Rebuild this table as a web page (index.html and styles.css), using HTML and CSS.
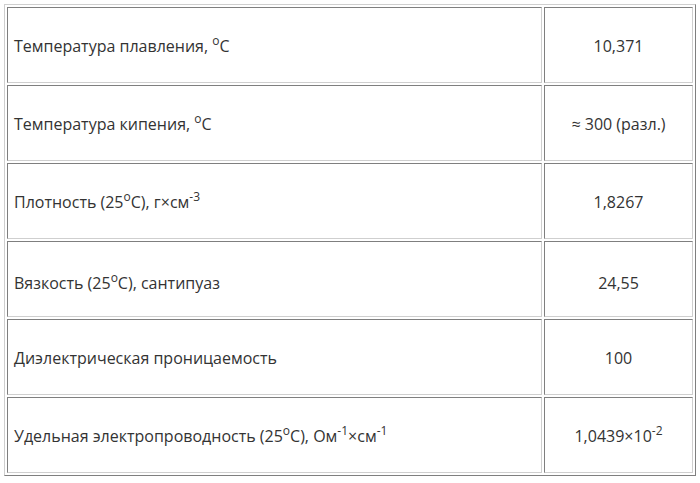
FILE: index.html
```html
<!DOCTYPE html>
<html lang="ru">
<head>
<meta charset="utf-8">
<link rel="stylesheet" href="styles.css">
</head>
<body>
<table class="props">
  <tr><td class="name">Температура плавления, <sup>o</sup>C</td><td class="val">10,371</td></tr>
  <tr><td class="name">Температура кипения, <sup>o</sup>C</td><td class="val">≈ 300 (разл.)</td></tr>
  <tr><td class="name">Плотность (25<sup>o</sup>C), г×см<sup>-3</sup></td><td class="val">1,8267</td></tr>
  <tr><td class="name lower">Вязкость (25<sup>o</sup>C), сантипуаз</td><td class="val lower">24,55</td></tr>
  <tr><td class="name">Диэлектрическая проницаемость</td><td class="val">100</td></tr>
  <tr><td class="name">Удельная электропроводность (25<sup>o</sup>C), Ом<sup>-1</sup>×см<sup>-1</sup></td><td class="val">1,0439×10<sup>-2</sup></td></tr>
</table>
</body>
</html>
```
FILE: styles.css
```css
html, body {
  margin: 0;
  padding: 0;
  background: #ffffff;
}
body {
  padding: 4px;
  font-family: "Open Sans", "Liberation Sans", sans-serif;
  font-size: 16px;
  color: #333333;
}
.props {
  width: 692px;
  border-collapse: separate;
  border-spacing: 2px;
  border: 1px solid;
  border-color: #cfcfcf #7f7f7f #7f7f7f #cfcfcf;
}
.props td {
  border: 1px solid;
  border-color: #7f7f7f #cfcfcf #cfcfcf #7f7f7f;
  height: 76px;
  padding: 2px 6px 0 6px;
  box-sizing: border-box;
  vertical-align: middle;
  line-height: 22px;
}
.props td.name {
  width: 535px;
}
.props td.val {
  text-align: center;
}
.props td.lower {
  padding-top: 7px;
}
sup {
  font-size: 12px;
  line-height: 0;
  vertical-align: 7px;
}
```
